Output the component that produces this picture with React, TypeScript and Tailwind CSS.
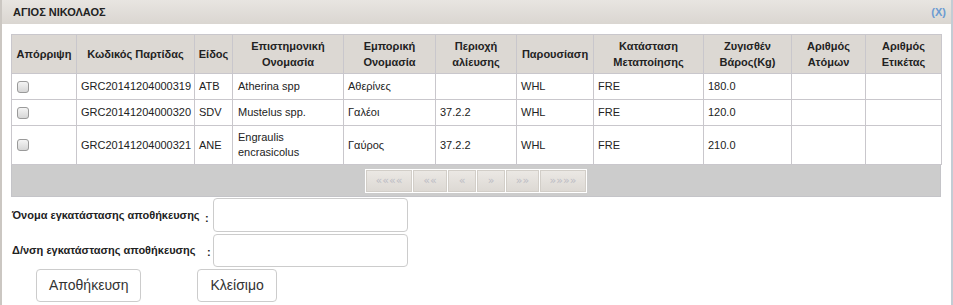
import React from "react";

const headers: React.ReactNode[] = [
  "Απόρριψη",
  "Κωδικός Παρτίδας",
  "Είδος",
  <>Επιστημονική<br />Ονομασία</>,
  <>Εμπορική<br />Ονομασία</>,
  <>Περιοχή<br />αλίευσης</>,
  "Παρουσίαση",
  <>Κατάσταση<br />Μεταποίησης</>,
  <>Ζυγισθέν<br />Βάρος(Kg)</>,
  <>Αριθμός<br />Ατόμων</>,
  <>Αριθμός<br />Ετικέτας</>,
];

const widths = [65, 118, 38, 111, 92, 81, 77, 110, 88, 74, 76];

const rows = [
  { code: "GRC20141204000319", sp: "ATB", sci: <>Atherina spp</>, com: "Αθερίνες", area: "", pres: "WHL", st: "FRE", w: "180.0", h: "h-[26px]" },
  { code: "GRC20141204000320", sp: "SDV", sci: <>Mustelus spp.</>, com: "Γαλέοι", area: "37.2.2", pres: "WHL", st: "FRE", w: "120.0", h: "h-[26px]" },
  { code: "GRC20141204000321", sp: "ANE", sci: <>Engraulis<br />encrasicolus</>, com: "Γαύρος", area: "37.2.2", pres: "WHL", st: "FRE", w: "210.0", h: "h-[39px]" },
];

const pager = [
  { label: "««««", w: "w-[46px]" },
  { label: "««", w: "w-[34px]" },
  { label: "«", w: "w-[28px]" },
  { label: "»", w: "w-[28px]" },
  { label: "»»", w: "w-[33px]" },
  { label: "»»»»", w: "w-[46px]" },
];

const Checkbox = () => (
  <span className="block w-[12px] h-[12px] ml-[1px] rounded-[3px] border border-[#9a9a9a] bg-gradient-to-b from-[#f4f4f4] to-[#d6d6d6]" />
);

export default function App() {
  const cell = "border border-[#c9c7cc] px-[4px] align-middle";
  return (
    <div className="w-[953px] h-[305px] bg-white overflow-hidden text-[#222] font-['Liberation_Sans',Arial,sans-serif]">
      <div className="h-full border-l-2 border-[#cbc7c2] border-r-2 border-r-[#c3ccd4]">
        {/* title bar */}
        <div className="h-[24px] flex items-center justify-between pl-[11px] pr-[5px] bg-gradient-to-b from-[#e8e5e1] to-[#dad6d1]">
          <span className="text-[11px] font-bold">ΑΓΙΟΣ ΝΙΚΟΛΑΟΣ</span>
          <span className="text-[11px] font-bold text-[#6b9bd2]">(X)</span>
        </div>

        <div className="pl-[9px] pt-[10px]">
          <table className="table-fixed border-collapse w-[930px] text-[11px] leading-[15px]">
            <colgroup>
              {widths.map((w, i) => (
                <col key={i} style={{ width: w }} />
              ))}
            </colgroup>
            <thead>
              <tr className="h-[39px] bg-[#dcd8d3]">
                {headers.map((h, i) => (
                  <th key={i} className="border border-[#c9c7cc] font-bold text-center leading-[16px] px-0">
                    {h}
                  </th>
                ))}
              </tr>
            </thead>
            <tbody>
              {rows.map((r) => (
                <tr key={r.code} className={r.h}>
                  <td className={cell}><Checkbox /></td>
                  <td className={cell}>{r.code}</td>
                  <td className={cell}>{r.sp}</td>
                  <td className={cell + " px-[5px]"}>{r.sci}</td>
                  <td className={cell}>{r.com}</td>
                  <td className={cell}>{r.area}</td>
                  <td className={cell}>{r.pres}</td>
                  <td className={cell}>{r.st}</td>
                  <td className={cell}>{r.w}</td>
                  <td className={cell}></td>
                  <td className={cell}></td>
                </tr>
              ))}
            </tbody>
          </table>

          {/* pager */}
          <div className="w-[930px] h-[32px] bg-[#cccccc] border border-t-0 border-[#c4c4c8] flex items-center justify-center">
            <div className="flex gap-[1px] bg-white p-[1px]">
              {pager.map((p) => (
                <span
                  key={p.w + p.label}
                  className={`${p.w} h-[22px] flex items-center justify-center border border-[#d2cec8] bg-gradient-to-b from-[#ebe8e4] to-[#ddd9d4] text-[11px] leading-none text-[#bcbcc4] font-['DejaVu_Sans',sans-serif]`}
                >
                  {p.label}
                </span>
              ))}
            </div>
          </div>
        </div>

        {/* form */}
        <div className="pl-[10px] pt-[1px] flex flex-col gap-[2px]">
          <div className="flex items-center">
            <span className="w-[193px] text-[11px] font-bold">Όνομα εγκατάστασης αποθήκευσης</span>
            <span className="w-[7px] text-[11px] font-bold mt-[6px]">:</span>
            <input className="ml-[1px] w-[195px] h-[34px] rounded-[4px] border border-[#cccccc] bg-white" />
          </div>
          <div className="flex items-center">
            <span className="w-[195px] text-[11px] font-bold">Δ/νση εγκατάστασης αποθήκευσης</span>
            <span className="w-[5px] text-[11px] font-bold mt-[4px]">:</span>
            <input className="ml-[1px] w-[195px] h-[33px] rounded-[4px] border border-[#cccccc] bg-white" />
          </div>
          <div className="flex gap-[56px] pl-[24px]">
            <button className="h-[33px] px-[12px] rounded-[4px] border border-[#cccccc] bg-white text-[14px] text-[#333]">
              Αποθήκευση
            </button>
            <button className="h-[33px] px-[12px] rounded-[4px] border border-[#cccccc] bg-white text-[14px] text-[#333]">
              Κλείσιμο
            </button>
          </div>
        </div>
      </div>
    </div>
  );
}
